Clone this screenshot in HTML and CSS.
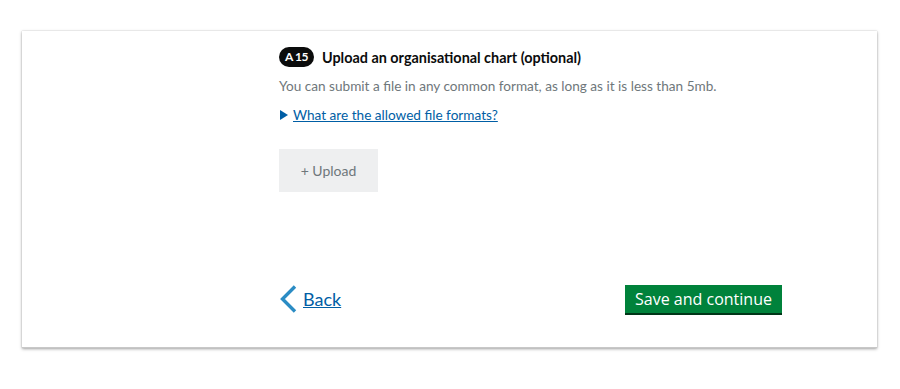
FILE: index.html
```html
<!DOCTYPE html>
<html lang="en">
<head>
    <meta charset="UTF-8">
    <meta name="viewport" content="width=device-width, initial-scale=1.0">
    <title>Upload an organisational chart</title>
    <link rel="stylesheet" href="styles.css">
</head>
<body>
    <div class="page-card">
        <div class="question">
            <div class="question-title">
                <span class="question-badge">A 15</span>
                <h2>Upload an organisational chart (optional)</h2>
            </div>
            <p class="hint">You can submit a file in any common format, as long as it is less than 5mb.</p>
            <details class="formats">
                <summary><span class="formats-link">What are the allowed file formats?</span></summary>
            </details>
            <button class="upload-button" type="button">+ Upload</button>
        </div>

        <div class="page-actions">
            <a class="back-link" href="#">
                <svg width="18" height="28" viewBox="0 0 18 28" aria-hidden="true">
                    <path d="M16 1.5 L3.5 14 L16 26.5" fill="none" stroke="#2b8cc4" stroke-width="3.4"/>
                </svg>
                <span>Back</span>
            </a>
            <button class="save-button" type="submit">Save and continue</button>
        </div>
    </div>
</body>
</html>
```

FILE: styles.css
```css
html, body {
    height: 100%;
}
body {
    margin: 0;
    background: #ffffff;
    font-family: 'Lato', 'Liberation Sans', sans-serif;
    color: #0b0c0c;
}
.page-card {
    margin: 31px 23px 0 22px;
    height: 317px;
    box-sizing: border-box;
    background: #ffffff;
    box-shadow: 0 1px 3px rgba(0, 0, 0, 0.35), 0 0 1px rgba(0, 0, 0, 0.2);
    border-bottom: 1px solid #c8c8c8;
    padding: 16px 95px 0 257px;
    display: flex;
    flex-direction: column;
}
.question-title {
    display: flex;
    align-items: center;
    gap: 8px;
    height: 20px;
}
.question-badge {
    background: #0b0c0c;
    color: #ffffff;
    font-size: 12px;
    font-weight: 700;
    border-radius: 10px;
    width: 35px;
    height: 20px;
    line-height: 20px;
    text-align: center;
    letter-spacing: -0.4px;
}
.question-title h2 {
    margin: 0;
    font-size: 14.4px;
    font-weight: 700;
}
.hint {
    margin: 10px 0 0;
    font-size: 13.6px;
    line-height: 18px;
    color: #6f777b;
}
.formats {
    margin-top: 11px;
}
.formats summary {
    list-style: none;
    display: flex;
    align-items: center;
    font-size: 13.6px;
    line-height: 18px;
    color: #005ea5;
    cursor: pointer;
}
.formats summary::-webkit-details-marker {
    display: none;
}
.formats summary::before {
    content: "";
    margin: 0 5px 0 1px;
    border-left: 8px solid #005ea5;
    border-top: 5px solid transparent;
    border-bottom: 5px solid transparent;
}
.formats-link {
    text-decoration: underline;
}
.upload-button {
    margin-top: 25px;
    width: 99px;
    height: 43px;
    border: none;
    background: #eeeff0;
    color: #6f777b;
    font-family: inherit;
    font-size: 14px;
    cursor: pointer;
}
.page-actions {
    margin-top: auto;
    margin-bottom: 34px;
    display: flex;
    justify-content: space-between;
    align-items: center;
}
.back-link {
    display: flex;
    align-items: center;
    gap: 6px;
    color: #005ea5;
    font-size: 18px;
    text-decoration: none;
}
.back-link span {
    text-decoration: underline;
}
.save-button {
    width: 157px;
    height: 28px;
    border: none;
    background: #00823b;
    box-shadow: 0 2px 0 #003618;
    color: #ffffff;
    font-family: 'Open Sans', sans-serif;
    font-size: 16px;
    padding: 0 0 1px;
    cursor: pointer;
}
```
